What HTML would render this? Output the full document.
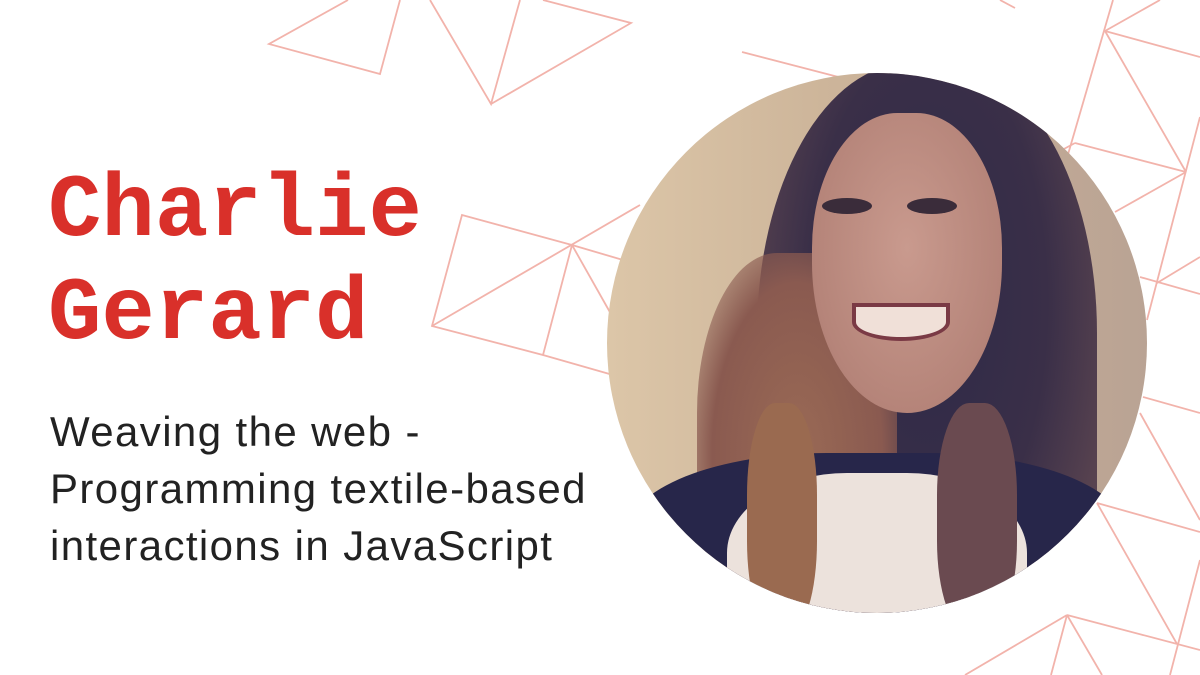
<!DOCTYPE html>
<html><head><meta charset="utf-8"><style>
html,body{margin:0;padding:0;background:#fff;}
body{width:1200px;height:675px;position:relative;overflow:hidden;font-family:"Liberation Sans",sans-serif;}
svg.bg{position:absolute;left:0;top:0;}
.name{position:absolute;left:48px;top:160px;font-family:"Liberation Mono",monospace;font-weight:bold;font-size:89px;line-height:103px;color:#d9302a;}
.sub{position:absolute;left:50px;top:403px;font-size:42px;line-height:57px;color:#222;letter-spacing:1.4px;}
.photo{position:absolute;left:607px;top:73px;width:540px;height:540px;border-radius:50%;overflow:hidden;
background:linear-gradient(90deg,#dcc6a8 0%,#cdb59a 40%,#c4ab96 70%,#b9a394 100%);}
.photo div{position:absolute;}
</style></head><body>
<svg class="bg" width="1200" height="675" viewBox="0 0 1200 675" fill="none" stroke="#f2b3ab" stroke-width="1.8">
<polyline points="348,0 269,44 380,74 400,0"/>
<polyline points="430,0 491,104 520,0"/>
<polyline points="491,104 631,23 543,0"/>
<polygon points="462,215 572,245 543,355 432,326"/>
<line x1="432" y1="326" x2="640" y2="205"/>
<line x1="572" y1="245" x2="640" y2="265"/>
<line x1="572" y1="245" x2="620" y2="330"/>
<line x1="543" y1="355" x2="620" y2="377"/>
<line x1="742" y1="52" x2="850" y2="80"/>
<line x1="1113" y1="0" x2="1062" y2="175"/>
<line x1="1105" y1="31" x2="1160" y2="0"/>
<line x1="1105" y1="31" x2="1200" y2="57"/>
<line x1="1105" y1="31" x2="1186" y2="172"/>
<line x1="1075" y1="143" x2="1186" y2="172"/>
<line x1="1075" y1="143" x2="1062" y2="150"/>
<line x1="1186" y1="172" x2="1115" y2="212"/>
<line x1="1200" y1="117" x2="1147" y2="320"/>
<line x1="1200" y1="257" x2="1157" y2="283"/>
<line x1="1140" y1="277" x2="1200" y2="294"/>
<line x1="1143" y1="397" x2="1200" y2="413"/>
<line x1="1140" y1="413" x2="1200" y2="520"/>
<line x1="1097" y1="503" x2="1200" y2="532"/>
<line x1="1097" y1="503" x2="1177" y2="644"/>
<line x1="1200" y1="560" x2="1170" y2="675"/>
<line x1="1067" y1="615" x2="1200" y2="650"/>
<line x1="1067" y1="615" x2="965" y2="675"/>
<line x1="1067" y1="615" x2="1051" y2="675"/>
<line x1="1067" y1="615" x2="1102" y2="675"/>
<line x1="1000" y1="0" x2="1015" y2="8"/>
</svg>
<div class="name">Charlie<br>Gerard</div>
<div class="sub">Weaving the web -<br>Programming textile-based<br>interactions in JavaScript</div>
<div class="photo">
 <div style="left:150px;top:-10px;width:340px;height:600px;border-radius:45% 45% 20% 20%;background:radial-gradient(ellipse at 50% 40%,#2e2a48 0%,#3a2f48 50%,#5a4450 80%,rgba(120,80,70,0) 100%);"></div>
 <div style="left:90px;top:180px;width:200px;height:400px;border-radius:40%;background:radial-gradient(ellipse at 50% 50%,#9a6a55 0%,#8a5a50 60%,rgba(150,110,90,0) 100%);"></div>
 <div style="left:205px;top:40px;width:190px;height:300px;border-radius:45% 45% 50% 50%;background:radial-gradient(ellipse at 50% 45%,#c99a8e 0%,#b58479 70%,#9a6a64 100%);"></div>
 <div style="left:215px;top:125px;width:50px;height:16px;border-radius:50%;background:#3a2c3a;"></div>
 <div style="left:300px;top:125px;width:50px;height:16px;border-radius:50%;background:#3a2c3a;"></div>
 <div style="left:245px;top:230px;width:90px;height:30px;border-radius:0 0 50% 50%;background:#f0e0d8;border:4px solid #7a3a45;"></div>
 <div style="left:20px;top:380px;width:500px;height:200px;border-radius:40% 40% 0 0;background:#27264a;"></div>
 <div style="left:120px;top:400px;width:300px;height:200px;border-radius:40% 40% 0 0;background:#ece2dc;"></div>
 <div style="left:140px;top:330px;width:70px;height:230px;border-radius:40%;background:#9a6a50;"></div>
 <div style="left:330px;top:330px;width:80px;height:230px;border-radius:40%;background:#6a4a50;"></div>
</div>
</body></html>
